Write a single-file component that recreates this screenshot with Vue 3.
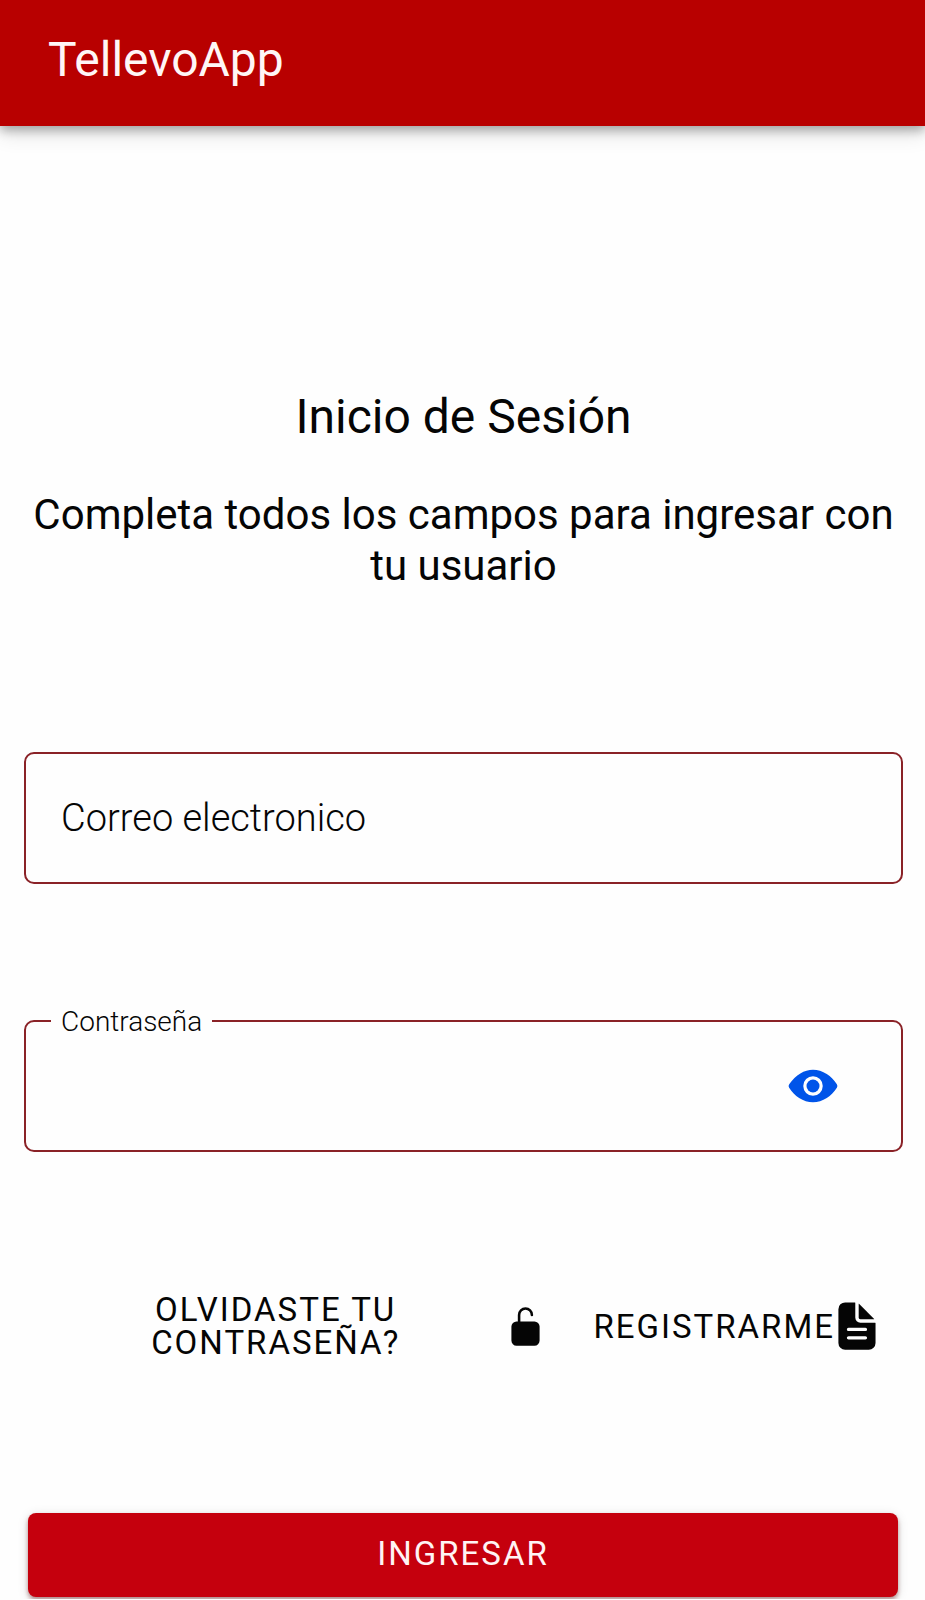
<script setup>
import { ref } from 'vue'

const email = ref('')
const password = ref('')
const visible = ref(false)
</script>

<template>
  <div class="page">
    <header class="toolbar">
      <span class="brand">TellevoApp</span>
    </header>

    <main class="content">
      <h1 class="title">Inicio de Sesión</h1>
      <p class="subtitle">Completa todos los campos para ingresar con tu usuario</p>

      <form @submit.prevent>
        <div class="field">
          <input id="email" v-model="email" class="control" type="email" placeholder=" " />
          <label class="label" for="email">Correo electronico</label>
        </div>

        <div class="field">
          <input
            id="password"
            v-model="password"
            class="control with-toggle"
            :type="visible ? 'text' : 'password'"
          />
          <label class="label floating" for="password">Contraseña</label>
          <button class="toggle" type="button" aria-label="Mostrar contraseña" @click="visible = !visible">
            <svg class="eye" viewBox="0 0 512 512" aria-hidden="true">
              <circle cx="256" cy="256" r="64" />
              <path d="M490.84 238.6c-26.46-40.92-60.79-75.68-99.27-100.53C349 110.55 302 96 255.66 96c-42.52 0-84.33 12.15-124.27 36.11-40.73 24.43-77.63 60.12-109.68 106.07a31.92 31.92 0 00-.64 35.54c26.41 41.33 60.4 76.14 98.28 100.65C162 402 207.9 416 255.66 416c46.71 0 93.81-14.43 136.2-41.72 38.46-24.77 72.72-59.66 99.08-100.92a32.2 32.2 0 00-.1-34.76zM256 352a96 96 0 1196-96 96.11 96.11 0 01-96 96z" />
            </svg>
          </button>
        </div>

        <div class="links">
          <button class="link forgot" type="button">
            <span class="forgot-text">Olvidaste tu contraseña?</span>
            <svg class="lock" viewBox="0 0 512 512" aria-hidden="true">
              <path d="M368 192H192v-80a64 64 0 01128 0 16 16 0 0032 0 96 96 0 10-192 0v80h-16a64.07 64.07 0 00-64 64v176a64.07 64.07 0 0064 64h224a64.07 64.07 0 0064-64V256a64.07 64.07 0 00-64-64z" />
            </svg>
          </button>
          <button class="link" type="button">
            <span>Registrarme</span>
            <svg class="doc" viewBox="48 0 464 512" aria-hidden="true">
              <path d="M428 224H288a48 48 0 01-48-48V36a4 4 0 00-4-4h-92a64 64 0 00-64 64v320a64 64 0 0064 64h224a64 64 0 0064-64V228a4 4 0 00-4-4zm-92 160H176a16 16 0 010-32h160a16 16 0 010 32zm0-80H176a16 16 0 010-32h160a16 16 0 010 32z" />
              <path d="M419.22 188.59L275.41 44.78a2 2 0 00-3.41 1.41V176a16 16 0 0016 16h129.81a2 2 0 001.41-3.41z" />
            </svg>
          </button>
        </div>

        <button class="submit" type="submit">Ingresar</button>
      </form>
    </main>
  </div>
</template>

<style>
body {
  background: #fefefe;
}
</style>

<style scoped>
.page,
.page button,
.page input {
  font-family: Roboto, "Liberation Sans", sans-serif;
}

.page {
  color: #050505;
}

.page button {
  margin: 0;
  padding: 0;
  border: 0;
  background: none;
  color: inherit;
  cursor: pointer;
}

.toolbar {
  padding: 32px 48px 38px;
  background: #b80000;
  color: #fff6f6;
  box-shadow: 0 4px 10px rgba(0, 0, 0, 0.3), 0 8px 20px rgba(0, 0, 0, 0.12);
}

.brand {
  display: block;
  font-size: 48px;
  line-height: 56px;
  font-weight: 400;
}

.content {
  padding: 263px 22px 2px 24px;
}

.title {
  margin: 0;
  font-size: 48px;
  line-height: 56px;
  font-weight: 400;
  text-align: center;
}

.subtitle {
  margin: 44px 0 161px;
  font-size: 42px;
  line-height: 51px;
  text-align: center;
}

.field {
  position: relative;
  margin-bottom: 136px;
}

.control {
  display: block;
  box-sizing: border-box;
  width: 100%;
  height: 132px;
  padding: 0 36px;
  border: 2px solid #8a2227;
  border-radius: 10px;
  outline: none;
  background: transparent;
  color: inherit;
  font-size: 38px;
}

.with-toggle {
  padding-right: 136px;
}

.label {
  position: absolute;
  top: 42px;
  left: 27px;
  padding: 0 10px;
  background: #fefefe;
  font-size: 38px;
  line-height: 48px;
  font-weight: 300;
  pointer-events: none;
}

.label.floating,
.control:focus + .label,
.control:not(:placeholder-shown) + .label {
  top: -15px;
  font-size: 28px;
  line-height: 34px;
}

.page .toggle {
  position: absolute;
  top: 0;
  right: 64px;
  display: flex;
  align-items: center;
  height: 100%;
  color: #0054e9;
}

svg {
  display: block;
  flex: none;
  fill: currentColor;
}

.eye {
  width: 52px;
  height: 52px;
}

.links {
  display: flex;
  align-items: center;
  gap: 47px;
  margin: 141px 19px 154px 22px;
}

.link {
  display: flex;
  align-items: center;
  font-size: 33px;
  line-height: 33px;
  letter-spacing: 2px;
  text-transform: uppercase;
}

.forgot {
  flex: 1;
}

.forgot-text {
  flex: 1;
  padding: 0 48px;
}

.lock {
  width: 41px;
  height: 41px;
}

.doc {
  width: 49px;
  height: 54px;
}

.page .submit {
  display: block;
  width: calc(100% - 9px);
  height: 84px;
  margin: 0 5px 0 4px;
  padding-bottom: 4px;
  border-radius: 8px;
  background: #c5000d;
  color: #fff4f4;
  font-size: 33px;
  letter-spacing: 2px;
  text-transform: uppercase;
  box-shadow: 0 3px 4px rgba(90, 0, 0, 0.4), 0 2px 12px rgba(0, 0, 0, 0.12);
}
</style>
